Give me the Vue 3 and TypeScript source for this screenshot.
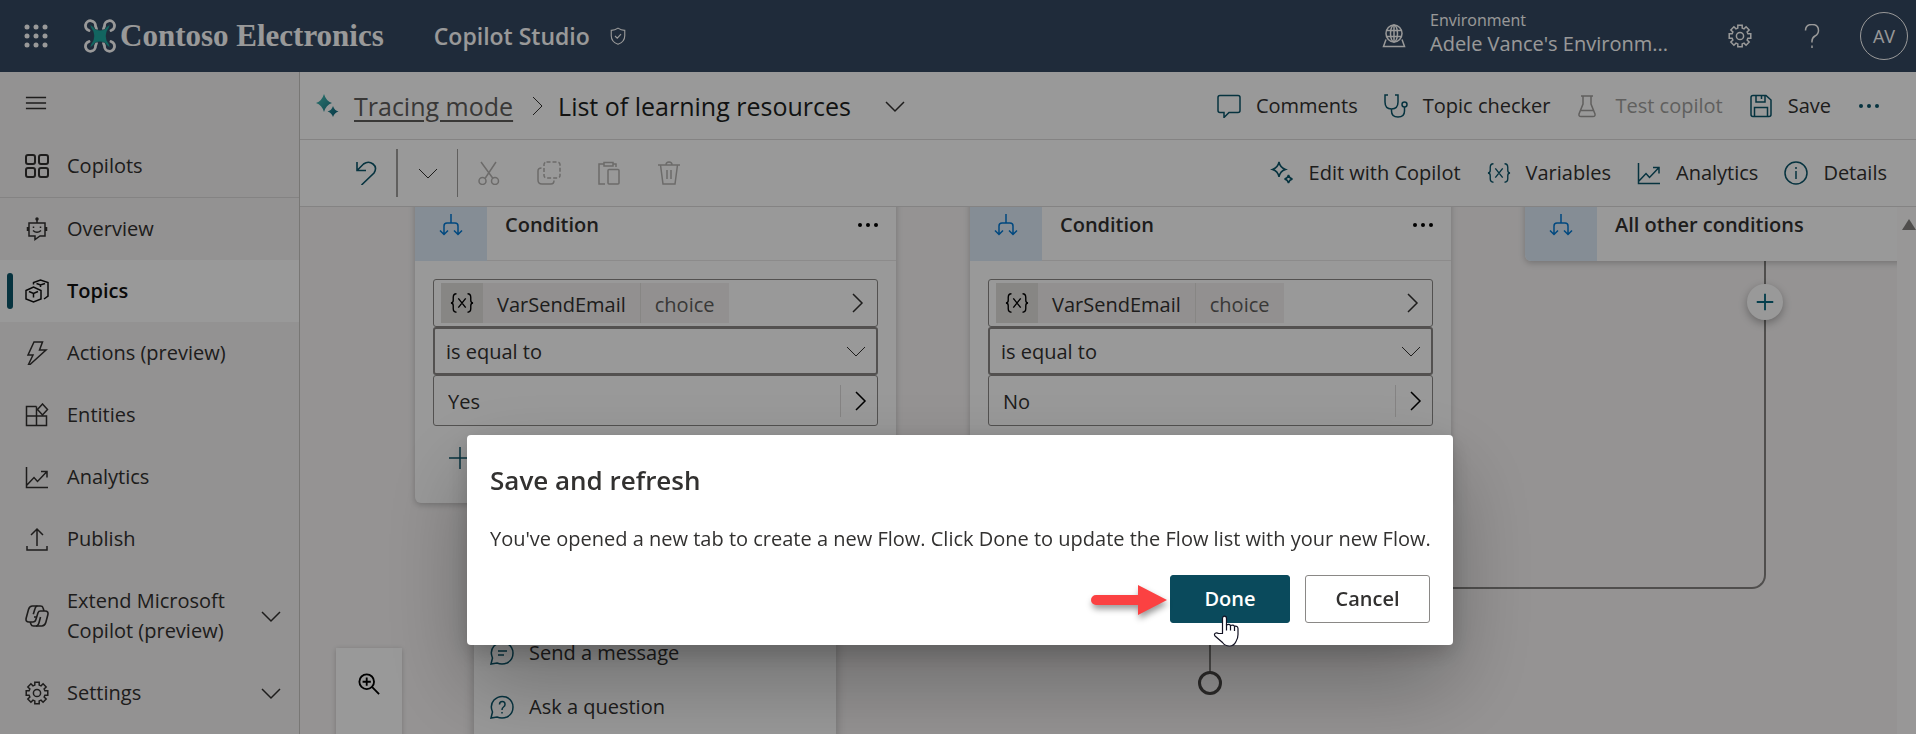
<script setup lang="ts">
import { ref } from 'vue'

interface NavItem {
  label: string
  icon: string
  active?: boolean
  tall?: boolean
}

interface Condition {
  id: string
  variable: string
  type: string
  operator: string
  value: string
}

interface Action {
  label: string
  icon: string
  disabled?: boolean
}

const navItems: NavItem[] = [
  { label: 'Overview', icon: 'bot' },
  { label: 'Topics', icon: 'cubes', active: true },
  { label: 'Actions (preview)', icon: 'bolt' },
  { label: 'Entities', icon: 'entities' },
  { label: 'Analytics', icon: 'chart' },
  { label: 'Publish', icon: 'publish' },
]

const navGroups: NavItem[] = [
  { label: 'Extend Microsoft Copilot (preview)', icon: 'copilot', tall: true },
  { label: 'Settings', icon: 'gear' },
]

const topicActions: Action[] = [
  { label: 'Comments', icon: 'comment' },
  { label: 'Topic checker', icon: 'stethoscope' },
  { label: 'Test copilot', icon: 'flask', disabled: true },
  { label: 'Save', icon: 'save' },
]

const editTools: Action[] = [
  { label: 'Cut', icon: 'cut' },
  { label: 'Copy', icon: 'copy' },
  { label: 'Paste', icon: 'paste' },
  { label: 'Delete', icon: 'trash' },
]

const panelActions: Action[] = [
  { label: 'Edit with Copilot', icon: 'sparkles' },
  { label: 'Variables', icon: 'variable' },
  { label: 'Analytics', icon: 'chart' },
  { label: 'Details', icon: 'info' },
]

const conditions = ref<Condition[]>([
  { id: 'first', variable: 'VarSendEmail', type: 'choice', operator: 'is equal to', value: 'Yes' },
  { id: 'second', variable: 'VarSendEmail', type: 'choice', operator: 'is equal to', value: 'No' },
])

const nodeMenu: Action[] = [
  { label: 'Send a message', icon: 'message' },
  { label: 'Ask a question', icon: 'question' },
]

// Outline of an eight-toothed gear centred in a 24-unit box.
function gearOutline(): string {
  const points: string[] = []
  for (let i = 0; i < 8; i++) {
    const base = (i * Math.PI) / 4
    const corners: [number, number][] = [
      [-0.27, 8.2],
      [-0.2, 11],
      [0.2, 11],
      [0.27, 8.2],
    ]
    for (const [offset, radius] of corners) {
      const x = 12 + radius * Math.sin(base + offset)
      const y = 12 - radius * Math.cos(base + offset)
      points.push(`${x.toFixed(2)} ${y.toFixed(2)}`)
    }
  }
  return `M${points.join('L')}Z`
}

const gearPath = gearOutline()
const waffleDots = [3, 12, 21].flatMap((y) => [3, 12, 21].map((x) => ({ x, y })))
</script>

<template>
  <div class="app">
    <svg class="symbols" aria-hidden="true">
      <defs>
        <linearGradient id="spark-fill" x1="0" y1="0" x2="1" y2="1">
          <stop offset="0" stop-color="#4cc3b8" />
          <stop offset="1" stop-color="#0a6078" />
        </linearGradient>
      </defs>
      <symbol id="i-menu" viewBox="0 0 24 24"><path d="M1 6h22M1 12h22M1 18h22" /></symbol>
      <symbol id="i-grid" viewBox="0 0 24 24">
        <g stroke-width="2">
          <rect x="1" y="1" width="9" height="9" rx="2" /><rect x="14" y="1" width="9" height="9" rx="2" />
          <rect x="1" y="14" width="9" height="9" rx="2" /><rect x="14" y="14" width="9" height="9" rx="2" />
        </g>
      </symbol>
      <symbol id="i-bot" viewBox="0 0 24 24">
        <path d="M12 2v4M4 6h16v13h-5l-5 3.500v-3.500h-6zM2.500 10v4M21.500 10v4M8 13.500q4 3.500 8 0" />
        <path d="M8.500 9.500v1.500M15.500 9.500v1.500" /><circle cx="12" cy="2" r="1" fill="currentColor" />
      </symbol>
      <symbol id="i-cubes" viewBox="0 0 24 24">
        <path d="M1 11.500l7.500-3.500 7.500 3.500v8.500l-7.500 3-7.500-3zM4 12.500l4.500 2 4.500-2M8.500 14.500v4" />
        <path d="M8.500 5.500v-2l7-2.500 7.500 2.500v13.500l-4 3M11.500 4.500l4 1.500 4.500-1.500M15.500 6v2" />
      </symbol>
      <symbol id="i-bolt" viewBox="0 0 24 24"><path d="M9 1h8.500l-3 8h6.500l-16 14.500h-1.500l4.500-9.500h-5z" /></symbol>
      <symbol id="i-entities" viewBox="0 0 24 24">
        <path d="M11.500 3.500h-10v19h20v-9.500h-20M11.500 3.500v19M17.500 1l5 5.500-5 5.500-5-5.500z" />
      </symbol>
      <symbol id="i-chart" viewBox="0 0 24 24">
        <path d="M1.500 2v20.500h21.500M1.500 20.500l7.500-8 3.500 4 9-9.500M16 6.500h6v6" />
      </symbol>
      <symbol id="i-publish" viewBox="0 0 24 24"><path d="M12 19v-17M6 8l6-6 6 6M2 19v4h20v-4" /></symbol>
      <symbol id="i-copilot" viewBox="0 0 24 24">
        <g stroke-width="1.600">
          <path d="M7.500 2h8q2 0 2.500 1.800l1 3.200M7.500 2q-3 0-4 3.500l-2.300 8.500q-.9 4 2.800 4h4q2.200 0 2.800-2.200l2.200-7q.6-1.800 2.500-1.800h4.500q3.800 0 2.800 4l-2 7.500q-1 3.500-4 3.500h-8.300q-2 0-2.500-1.800l-1-2.500" />
          <path d="M12.500 2q-1.800 0-2.400 2.200l-1.800 6M15.500 13l-1.300 5q-1 4-3.200 4M12 13h-3" />
        </g>
      </symbol>
      <symbol id="i-gear" viewBox="0 0 24 24"><path :d="gearPath" /><circle cx="12" cy="12" r="3.600" /></symbol>
      <symbol id="i-down" viewBox="0 0 20 20"><path d="M1 6l9 9 9-9" /></symbol>
      <symbol id="i-right" viewBox="0 0 20 20"><path d="M6 1l9 9-9 9" /></symbol>
      <symbol id="i-comment" viewBox="0 0 24 24">
        <path d="M3 1.500h18q2 0 2 2v13q0 2-2 2h-9l-5 5v-5h-4q-2 0-2-2v-13q0-2 2-2z" />
      </symbol>
      <symbol id="i-stethoscope" viewBox="0 0 24 24">
        <path d="M4 1h-3v7q0 7 6.500 7t6.500-7v-7h-3M7.500 15v2q0 6 6.500 6t6.500-6v-4" /><circle cx="20.500" cy="10.500" r="2.500" />
      </symbol>
      <symbol id="i-flask" viewBox="0 0 24 24"><path d="M5 2h12M7 2v8l-4 10q-.5 2.500 2 2.500h12q2.500 0 2-2.500l-4-10v-8M5 16.500h12" /></symbol>
      <symbol id="i-save" viewBox="0 0 24 24">
        <path d="M4 1.500h13l5 4.500v14.500q0 2-2 2h-16q-2 0-2-2v-17q0-2 2-2zM7 1.500v6.500h9v-6.500M5.500 22.500v-9h13v9M12.500 2v3" />
      </symbol>
      <symbol id="i-more" viewBox="0 0 24 24">
        <g fill="currentColor" stroke="none"><circle cx="4" cy="12" r="2" /><circle cx="12" cy="12" r="2" /><circle cx="20" cy="12" r="2" /></g>
      </symbol>
      <symbol id="i-undo" viewBox="0 0 24 24"><path d="M3 1v8.500h9M3 9.500l6.500-6.500q5-3.500 9.500 0t1 9l-12.500 12" stroke-width="1.600" /></symbol>
      <symbol id="i-cut" viewBox="0 0 24 24">
        <path d="M4 1l12 16.500M19 1l-11 16.500" /><circle cx="5.500" cy="20" r="3.500" /><circle cx="18" cy="20" r="3.500" />
      </symbol>
      <symbol id="i-copy" viewBox="0 0 24 24">
        <rect x="7" y="1" width="16" height="16" rx="2.500" stroke-dasharray="4 2" />
        <path d="M4.500 7q-3.500 0-3.500 3v9q0 4 4 4h9q3 0 3-3.500" />
      </symbol>
      <symbol id="i-paste" viewBox="0 0 24 24">
        <path d="M7 3h-5v20h6M16 3h3v3M7 1.500h9v3.500h-9z" /><rect x="11" y="8.500" width="11" height="14.500" rx="1" />
      </symbol>
      <symbol id="i-trash" viewBox="0 0 24 24"><path d="M1 4h22M3.500 4l2.500 19h12l2.500-19M9 4q0-3 3-3t3 3M10 9v9M14 9v9" /></symbol>
      <symbol id="i-sparkles" viewBox="0 0 24 24">
        <path d="M9 1q1 5.500 6.500 7.500q-5.500 1.500-6.500 7.500q-1-6-6.500-7.500q5.500-2 6.500-7.500zM18.500 14q.7 3.300 4 4q-3.300.7-4 4q-.7-3.300-4-4q3.300-.7 4-4z" />
      </symbol>
      <symbol id="i-spark-solid" viewBox="0 0 24 24">
        <path fill="url(#spark-fill)" stroke="none" d="M9 0q2 7 8 9q-6 2-8 9q-2-7-8-9q6-2 8-9zM18 12q1.500 4.500 5.500 5.500q-4 1-5.500 5.500q-1.500-4.500-5.500-5.500q4-1 5.500-5.500z" />
      </symbol>
      <symbol id="i-variable" viewBox="0 0 26 24">
        <path d="M7 2q-3.500 0-3.500 4v3q0 3-2.500 3q2.500 0 2.500 3v3q0 4 3.500 4M19 2q3.500 0 3.500 4v3q0 3 2.500 3q-2.500 0-2.500 3v3q0 4-3.500 4M9 7l8 10M17 7l-8 10" />
      </symbol>
      <symbol id="i-info" viewBox="0 0 24 24"><circle cx="12" cy="12" r="11" /><path d="M12 10v8M12 6v2" /></symbol>
      <symbol id="i-branch" viewBox="0 0 24 24">
        <path d="M12 1v9M5 21v-8q0-3 3-3h8q3 0 3 3v8M1 17.500l4 4 4-4M15 17.500l4 4 4-4" />
      </symbol>
      <symbol id="i-plus" viewBox="0 0 24 24"><path d="M12 1v22M1 12h22" /></symbol>
      <symbol id="i-message" viewBox="0 0 24 24">
        <path d="M1 23l1.500-6q-3-7 1.500-12q5-5 12-3q7 3 7 10t-6 10q-5 2-10 0zM8 10h9M8 14h6" />
      </symbol>
      <symbol id="i-question" viewBox="0 0 24 24">
        <path d="M1 23l1.500-6q-3-7 1.500-12q5-5 12-3q7 3 7 10t-6 10q-5 2-10 0zM9.500 9.500q0-3 2.800-3t2.700 3q0 1.500-1.500 2.500t-1.500 3M12 17v1.500" />
      </symbol>
      <symbol id="i-zoom" viewBox="0 0 24 24"><circle cx="9.500" cy="9.500" r="8" /><path d="M15.500 15.500l7.500 7.500M9.500 5v9M5 9.500h9" /></symbol>
      <symbol id="i-globe" viewBox="0 0 24 24">
        <ellipse cx="12" cy="9.500" rx="8" ry="8.500" /><ellipse cx="12" cy="9.500" rx="3.500" ry="8.500" />
        <path d="M4.500 6.500h15M4.500 12.500h15M12 1v17M4 15.500l-2.500 7h21l-2.500-7" />
      </symbol>
      <symbol id="i-help" viewBox="0 0 24 24"><path d="M5.500 6.500q0-6 6.500-6t6.500 6q0 3.500-3.500 5.500t-3 6.500M12 21.500v2.500" /></symbol>
      <symbol id="i-shield" viewBox="0 0 24 24"><path d="M12 1.500q4 3 9 3v7q0 8-9 11.500q-9-3.500-9-11.500v-7q5 0 9-3zM8 12l3 3 5-5.500" /></symbol>
    </svg>

    <header class="topbar">
      <button class="plain" aria-label="App launcher">
        <svg class="icon"><circle v-for="dot in waffleDots" :key="`${dot.x}-${dot.y}`" :cx="dot.x" :cy="dot.y" r="2.500" class="dot" /></svg>
      </button>
      <a class="brand" href="#">
        <svg class="drone" viewBox="0 0 32 36" aria-hidden="true">
          <g fill="none" stroke="#fff" stroke-width="2.800" stroke-linecap="round">
            <path d="M5 12.500a5 5 0 1 1 6.500-4.500l1 3" /><path d="M27 12.500a5 5 0 1 0-6.500-4.500l-1 3" />
            <path d="M5 23.500a5 5 0 1 0 6.500 4.500l1-3" /><path d="M27 23.500a5 5 0 1 1-6.500 4.500l-1-3" />
          </g>
          <path fill="#1fa9a0" stroke="#354961" stroke-width="0.500" d="M6 6.500q3 1.500 5.500 5q4.500 1.500 9 0q2.500-3.500 5.500-5q-.5 3.500-3 6.500q-2 5 0 10q2.500 3 3 6.500q-3-1.500-5.500-5q-4.500-1.500-9 0q-2.500 3.500-5.500 5q.5-3.500 3-6.500q2-5 0-10q-2.500-3-3-6.500z" />
        </svg>
        <span>Contoso Electronics</span>
      </a>
      <span class="product">Copilot Studio</span>
      <svg class="icon tiny"><use href="#i-shield" /></svg>
      <div class="topbar-end">
        <svg class="icon"><use href="#i-globe" /></svg>
        <div class="environment"><small>Environment</small><span>Adele Vance's Environm...</span></div>
        <button class="plain" aria-label="Settings"><svg class="icon"><use href="#i-gear" /></svg></button>
        <button class="plain help" aria-label="Help"><svg class="icon"><use href="#i-help" /></svg></button>
        <button class="avatar">AV</button>
      </div>
    </header>

    <div class="body">
      <nav class="sidebar">
        <button class="plain menu" aria-label="Toggle navigation"><svg class="icon small"><use href="#i-menu" /></svg></button>
        <a class="nav-item home" href="#"><svg class="icon"><use href="#i-grid" /></svg><span>Copilots</span></a>
        <a v-for="item in navItems" :key="item.label" class="nav-item" :class="{ active: item.active }" href="#">
          <svg class="icon"><use :href="`#i-${item.icon}`" /></svg><span>{{ item.label }}</span>
        </a>
        <button v-for="group in navGroups" :key="group.label" class="nav-item" :class="{ tall: group.tall }">
          <svg class="icon"><use :href="`#i-${group.icon}`" /></svg><span>{{ group.label }}</span>
          <svg class="icon chevron"><use href="#i-down" /></svg>
        </button>
      </nav>

      <main class="content">
        <div class="bar titlebar">
          <svg class="icon"><use href="#i-spark-solid" /></svg>
          <a class="crumb" href="#">Tracing mode</a>
          <svg class="icon chevron crumb-sep"><use href="#i-right" /></svg>
          <h1>List of learning resources</h1>
          <button class="plain" aria-label="Topic options"><svg class="icon chevron"><use href="#i-down" /></svg></button>
          <div class="actions">
            <button v-for="action in topicActions" :key="action.label" class="action" :disabled="action.disabled">
              <svg class="icon"><use :href="`#i-${action.icon}`" /></svg>{{ action.label }}
            </button>
            <button class="action" aria-label="More"><svg class="icon"><use href="#i-more" /></svg></button>
          </div>
        </div>
        <div class="bar toolbar">
          <button class="plain accent" aria-label="Undo"><svg class="icon"><use href="#i-undo" /></svg></button>
          <button class="plain split" aria-label="Undo history"><svg class="icon chevron"><use href="#i-down" /></svg></button>
          <div class="edit-tools">
            <button v-for="tool in editTools" :key="tool.label" class="plain" disabled :aria-label="tool.label">
              <svg class="icon"><use :href="`#i-${tool.icon}`" /></svg>
            </button>
          </div>
          <div class="actions">
            <button v-for="action in panelActions" :key="action.label" class="action">
              <svg class="icon"><use :href="`#i-${action.icon}`" /></svg>{{ action.label }}
            </button>
          </div>
        </div>

        <section class="viewport">
          <div class="canvas">
            <div class="join" />
            <div class="end-line" />
            <div class="end-node" />
            <article v-for="condition in conditions" :key="condition.id" class="node" :class="condition.id">
              <header class="node-head">
                <span class="node-icon"><svg class="icon"><use href="#i-branch" /></svg></span>
                <h2>Condition</h2>
                <button class="plain" aria-label="Node options"><svg class="icon"><use href="#i-more" /></svg></button>
              </header>
              <div class="node-body">
                <button class="field variable">
                  <span class="token"><svg class="icon"><use href="#i-variable" /></svg></span>
                  <span class="name">{{ condition.variable }}</span><span class="type">{{ condition.type }}</span>
                  <svg class="icon chevron"><use href="#i-right" /></svg>
                </button>
                <div class="field operator">
                  <select v-model="condition.operator" aria-label="Operator"><option>is equal to</option></select>
                  <svg class="icon chevron"><use href="#i-down" /></svg>
                </div>
                <div class="field value">
                  <input v-model="condition.value" type="text" aria-label="Value" />
                  <button class="plain" aria-label="Choose value"><svg class="icon chevron"><use href="#i-right" /></svg></button>
                </div>
                <button class="plain accent add" aria-label="Add condition"><svg class="icon"><use href="#i-plus" /></svg></button>
              </div>
            </article>
            <article class="node other">
              <header class="node-head">
                <span class="node-icon"><svg class="icon"><use href="#i-branch" /></svg></span>
                <h2>All other conditions</h2>
              </header>
            </article>
            <button class="add-node" aria-label="Add node"><svg class="icon small"><use href="#i-plus" /></svg></button>
            <div class="node-menu">
              <button v-for="entry in nodeMenu" :key="entry.label">
                <svg class="icon"><use :href="`#i-${entry.icon}`" /></svg>{{ entry.label }}
              </button>
            </div>
            <div class="zoom-tools"><button class="plain" aria-label="Zoom in"><svg class="icon small"><use href="#i-zoom" /></svg></button></div>
          </div>
          <div class="scroll-track"><span class="scroll-up" /></div>
        </section>
      </main>
    </div>

    <div class="backdrop">
      <div class="dialog" role="dialog" aria-labelledby="dialog-title">
        <h2 id="dialog-title">Save and refresh</h2>
        <p>You've opened a new tab to create a new Flow. Click Done to update the Flow list with your new Flow.</p>
        <footer>
          <div class="done-wrap">
            <svg class="arrow" viewBox="0 0 76 30" aria-hidden="true">
              <path d="M5 10h42v-10l29 15-29 15v-10h-42a5 5 0 0 1 0-10z" fill="#fb4142" />
            </svg>
            <button class="primary">Done</button>
            <svg class="hand" viewBox="0 0 26 32" aria-hidden="true">
              <path
                d="M9.500 18.500V3.500q0-2.300 2-2.300t2 2.300V10q3-1.500 4 .5q3-1 4 .8q3.200-.8 3.500 2.200v6q0 4-2 7q-2 4.500-6.500 4.500q-4.500 0-7-3.500L2 21q-1.200-2 .3-2.800q1.500-.8 3.200.3z"
                fill="#fff" stroke="#111122" stroke-width="1.200" stroke-linejoin="round"
              />
              <path d="M13.500 9.500v6M17.500 10.500v5M21.500 11.500v4.500" fill="none" stroke="#111122" stroke-width="1.200" />
            </svg>
          </div>
          <button class="secondary">Cancel</button>
        </footer>
      </div>
    </div>
  </div>
</template>

<style>
body {
  background: #f3f2f1;
  overflow: hidden;
}
</style>

<style scoped>
.app {
  display: flex;
  flex-direction: column;
  height: 100vh;
  overflow: hidden;
  font-family: "Open Sans", "Noto Sans", sans-serif;
  font-size: 20px;
  line-height: 30px;
  color: #323130;
}
.app * {
  box-sizing: border-box;
}
button,
input,
select {
  font: inherit;
  color: inherit;
  margin: 0;
}
a {
  color: inherit;
  text-decoration: none;
}
h1,
h2,
p {
  margin: 0;
}
.symbols {
  position: absolute;
  width: 0;
  height: 0;
}
.icon {
  display: block;
  flex: none;
  width: 24px;
  height: 24px;
  fill: none;
  stroke: currentColor;
  stroke-width: 1.5;
}
.icon.small {
  width: 22px;
  height: 22px;
}
.icon.tiny {
  width: 18px;
  height: 18px;
}
.icon.chevron {
  width: 20px;
  height: 20px;
}
.plain {
  display: flex;
  padding: 0;
  border: 0;
  background: none;
}
.accent {
  color: #0b556a;
}

.topbar {
  display: flex;
  flex: none;
  align-items: center;
  height: 72px;
  padding: 0 8px 0 24px;
  background: #354961;
  color: #fff;
}
.dot {
  fill: currentColor;
  stroke: none;
}
.brand {
  display: flex;
  align-items: center;
  gap: 4px;
  margin-left: 36px;
  font-family: "Liberation Serif", serif;
  font-size: 31px;
  font-weight: 700;
}
.drone {
  width: 32px;
  height: 36px;
}
.product {
  margin: 0 19px 0 50px;
  font-size: 23px;
  font-weight: 600;
}
.topbar-end {
  display: flex;
  align-items: center;
  margin-left: auto;
}
.environment {
  display: flex;
  flex-direction: column;
  width: 322px;
  padding: 0 0 8px 24px;
  line-height: 24px;
}
.environment small {
  font-size: 16px;
}
.help {
  margin: 0 36px 0 48px;
}
.avatar {
  width: 48px;
  height: 48px;
  padding: 0;
  border: 1px solid #fff;
  border-radius: 50%;
  background: none;
  font-size: 18px;
}

.body {
  display: flex;
  flex: 1;
  min-height: 0;
}
.sidebar {
  display: flex;
  flex: none;
  flex-direction: column;
  width: 300px;
  background: #f6f3f3;
  border-right: 1px solid #c8c6c4;
}
.menu {
  padding: 20px 25px;
}
.nav-item {
  display: flex;
  flex: none;
  align-items: center;
  gap: 18px;
  min-height: 62px;
  padding: 1px 18px 1px 25px;
  border: 0;
  background: none;
  text-align: left;
}
.nav-item span {
  flex: 1;
}
.nav-item.tall {
  min-height: 92px;
}
.nav-item.home {
  height: 64px;
  border-bottom: 1px solid #dddbda;
}
.nav-item.active {
  position: relative;
  background: #fff;
  color: #111;
  font-weight: 600;
}
.nav-item.active::before {
  content: "";
  position: absolute;
  left: 7px;
  width: 6px;
  height: 36px;
  border-radius: 3px;
  background: #0b556a;
}

.content {
  display: flex;
  flex: 1;
  flex-direction: column;
  min-width: 0;
}
.bar {
  display: flex;
  flex: none;
  align-items: center;
  height: 67px;
  border-bottom: 1px solid #dddbda;
  background: #fff;
}
.titlebar {
  height: 68px;
  padding: 0 35px 0 15px;
}
.crumb {
  margin-left: 15px;
  color: #605e5c;
  font-size: 25px;
  text-decoration: underline;
  text-underline-offset: 4px;
  text-decoration-thickness: 2px;
}
.crumb-sep {
  margin: 0 11px 0 14px;
}
.crumb-sep,
.operator .chevron,
.split .chevron {
  stroke-width: 1;
}
h1 {
  margin-right: 34px;
  color: #201f1e;
  font-size: 25px;
  font-weight: 400;
}
.actions {
  display: flex;
  gap: 26px;
  margin-left: auto;
}
.action {
  display: flex;
  align-items: center;
  gap: 15px;
  padding: 0;
  border: 0;
  background: none;
}
.action .icon {
  color: #0b556a;
}
.action:disabled,
.action:disabled .icon {
  color: #a19f9d;
}
.edit-tools {
  color: #b5b3b1;
}
.toolbar {
  padding: 0 29px 0 54px;
}
.split {
  align-items: center;
  height: 48px;
  margin-left: 18px;
  padding: 0 19px 0 20px;
  border-right: 1px solid #a19f9d;
  border-left: 2px solid #a19f9d;
}
.edit-tools {
  display: flex;
  gap: 36px;
  margin-left: 19px;
}

.viewport {
  display: flex;
  flex: 1;
  min-height: 0;
}
.canvas {
  position: relative;
  flex: 1;
  overflow: hidden;
  background: #f8f5f5;
}
.scroll-track {
  width: 19px;
  padding: 12px 0 0 5px;
  background: #fdfcfc;
}
.scroll-up {
  display: block;
  border: 7px solid transparent;
  border-top: 0;
  border-bottom: 11px solid #858381;
}
.node {
  position: absolute;
  top: -18px;
  width: 481px;
  border-radius: 6px;
  background: #fff;
  box-shadow: 0 2px 6px rgba(0, 0, 0, 0.22);
  overflow: hidden;
}
.node.first {
  left: 115px;
}
.node.second {
  left: 670px;
}
.node.other {
  left: 1225px;
}
.node-head {
  display: flex;
  align-items: center;
  height: 72px;
  padding-right: 16px;
  border-bottom: 1px solid #eae8e8;
}
.other .node-head {
  border: 0;
}
.node-icon {
  display: grid;
  place-items: center;
  width: 72px;
  height: 72px;
  background: #deecf9;
  color: #0078d4;
}
.node-head h2 {
  flex: 1;
  margin-left: 18px;
  font-size: 20px;
  font-weight: 600;
}
.node-head .plain {
  color: #000;
}
.node-body {
  padding: 18px;
}
.field {
  display: flex;
  align-items: center;
  width: 100%;
  height: 48px;
  border: 1px solid #8a8886;
  border-radius: 3px;
  background: #fff;
}
.variable {
  padding: 3px 10px 3px 7px;
}
.token {
  display: grid;
  place-items: center;
  width: 42px;
  height: 40px;
  background: #e1dfdd;
  color: #000;
}
.name,
.type {
  display: flex;
  align-items: center;
  height: 40px;
  padding: 4px 14px 0;
  background: #f3f0f0;
}
.type {
  border-left: 1px solid #e1dfdd;
  color: #605e5c;
}
.variable .chevron {
  margin-left: auto;
}
.operator {
  position: relative;
  border-width: 2px;
}
.operator select {
  width: 100%;
  height: 100%;
  padding: 2px 11px 0;
  border: 0;
  background: none;
  appearance: none;
}
.operator .chevron {
  position: absolute;
  right: 10px;
  pointer-events: none;
}
.value {
  height: 51px;
}
.value input {
  flex: 1;
  min-width: 0;
  height: 32px;
  padding: 2px 14px 0;
  border: 0;
  border-right: 1px solid #dddbda;
  background: none;
}
.value .plain {
  padding: 0 7px 0 9px;
  color: #000;
}
.add {
  margin: 20px 0 15px 15px;
}
.join {
  position: absolute;
  top: 54px;
  left: 910px;
  width: 556px;
  height: 328px;
  border: 2px solid #858381;
  border-width: 0 2px 2px 0;
  border-radius: 0 0 14px 0;
}
.end-line {
  position: absolute;
  top: 400px;
  left: 909px;
  width: 2px;
  height: 66px;
  background: #858381;
}
.end-node {
  position: absolute;
  top: 464px;
  left: 898px;
  width: 24px;
  height: 24px;
  border: 3px solid #484644;
  border-radius: 50%;
}
.add-node {
  position: absolute;
  top: 77px;
  left: 1447px;
  display: grid;
  place-items: center;
  width: 36px;
  height: 36px;
  padding: 0;
  border: 0;
  border-radius: 50%;
  background: #fff;
  color: #0b6a80;
  box-shadow: 0 3px 8px rgba(0, 0, 0, 0.3);
}
.add-node .icon {
  width: 18px;
  height: 18px;
  stroke-width: 2.5;
}
.node-menu {
  position: absolute;
  top: 419px;
  left: 174px;
  width: 362px;
  padding-bottom: 20px;
  background: #fff;
  box-shadow: 0 3px 10px rgba(0, 0, 0, 0.25);
}
.node-menu button {
  display: flex;
  align-items: center;
  gap: 15px;
  width: 100%;
  height: 54px;
  padding: 0 16px;
  border: 0;
  background: none;
}
.node-menu .icon {
  color: #0b556a;
}
.zoom-tools {
  position: absolute;
  top: 441px;
  left: 36px;
  width: 66px;
  height: 120px;
  padding: 25px 22px;
  background: #fff;
  color: #000;
  box-shadow: 0 1px 5px rgba(0, 0, 0, 0.2);
}
.zoom-tools .icon {
  stroke-width: 2;
}

.backdrop {
  position: fixed;
  inset: 0;
  display: flex;
  align-items: flex-start;
  justify-content: center;
  padding: 435px 0 0 4px;
  background: rgba(0, 0, 0, 0.4);
}
.dialog {
  width: 986px;
  max-width: 100%;
  padding: 27px 23px 22px;
  border-radius: 4px;
  background: #fff;
  box-shadow: 0 38px 86px rgba(0, 0, 0, 0.28), 0 8px 22px rgba(0, 0, 0, 0.18);
}
.dialog h2 {
  font-size: 26px;
  font-weight: 600;
  line-height: 36px;
}
.dialog p {
  margin: 26px 0 21px;
  white-space: nowrap;
}
.dialog footer {
  display: flex;
  justify-content: flex-end;
  gap: 15px;
}
.dialog button {
  height: 48px;
  border: 1px solid #8a8886;
  border-radius: 3px;
  background: #fff;
  font-weight: 600;
}
.dialog .primary {
  width: 120px;
  border-color: #0a4a5c;
  background: #0a4a5c;
  color: #fff;
}
.dialog .secondary {
  width: 125px;
}
.done-wrap {
  position: relative;
}
.arrow {
  position: absolute;
  top: 10px;
  right: 123px;
  width: 76px;
  height: 30px;
  overflow: visible;
  filter: drop-shadow(1px 4px 3px rgba(0, 0, 0, 0.4));
}
.hand {
  position: absolute;
  top: 40px;
  left: 43px;
  width: 26px;
  height: 32px;
}
</style>
